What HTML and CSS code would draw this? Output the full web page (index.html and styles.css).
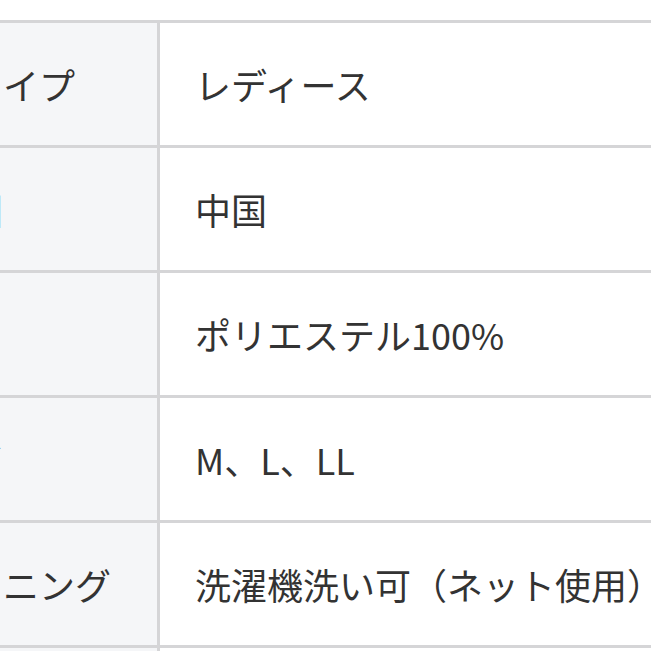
FILE: index.html
```html
<!DOCTYPE html>
<html lang="ja">
<head>
<meta charset="utf-8">
<link rel="stylesheet" href="styles.css">
</head>
<body>
<div class="frame">
  <div class="spec">
    <div class="label">商品タイプ</div><div class="value">レディース</div>
    <div class="label">原産国</div><div class="value">中国</div>
    <div class="label">素材</div><div class="value">ポリエステル100%</div>
    <div class="label">サイズ</div><div class="value">M、L、LL</div>
    <div class="label">クリーニング</div><div class="value">洗濯機洗い可（ネット使用）</div>
    <div class="label">カラー</div><div class="value">ブラック</div>
  </div>
</div>
</body>
</html>
```

FILE: styles.css
```css
html, body {
  margin: 0;
  padding: 0;
  overflow: hidden;
  background: #ffffff;
}
.frame {
  padding-top: 20px;
  margin-left: -143px;
  width: 1000px;
}
.spec {
  display: grid;
  grid-template-columns: 300px 1fr;
  grid-auto-rows: 122px;
  gap: 3px;
  border-top: 3px solid #d5d5d7;
  background: #d5d5d7;
  font-family: "Noto Sans CJK JP", "Noto Sans", sans-serif;
  font-size: 36px;
  color: #333333;
}
.label, .value {
  display: flex;
  align-items: center;
  white-space: nowrap;
}
.label {
  background: #f5f6f8;
  padding-left: 38px;
}
.value {
  background: #ffffff;
  padding-left: 35px;
}
```
